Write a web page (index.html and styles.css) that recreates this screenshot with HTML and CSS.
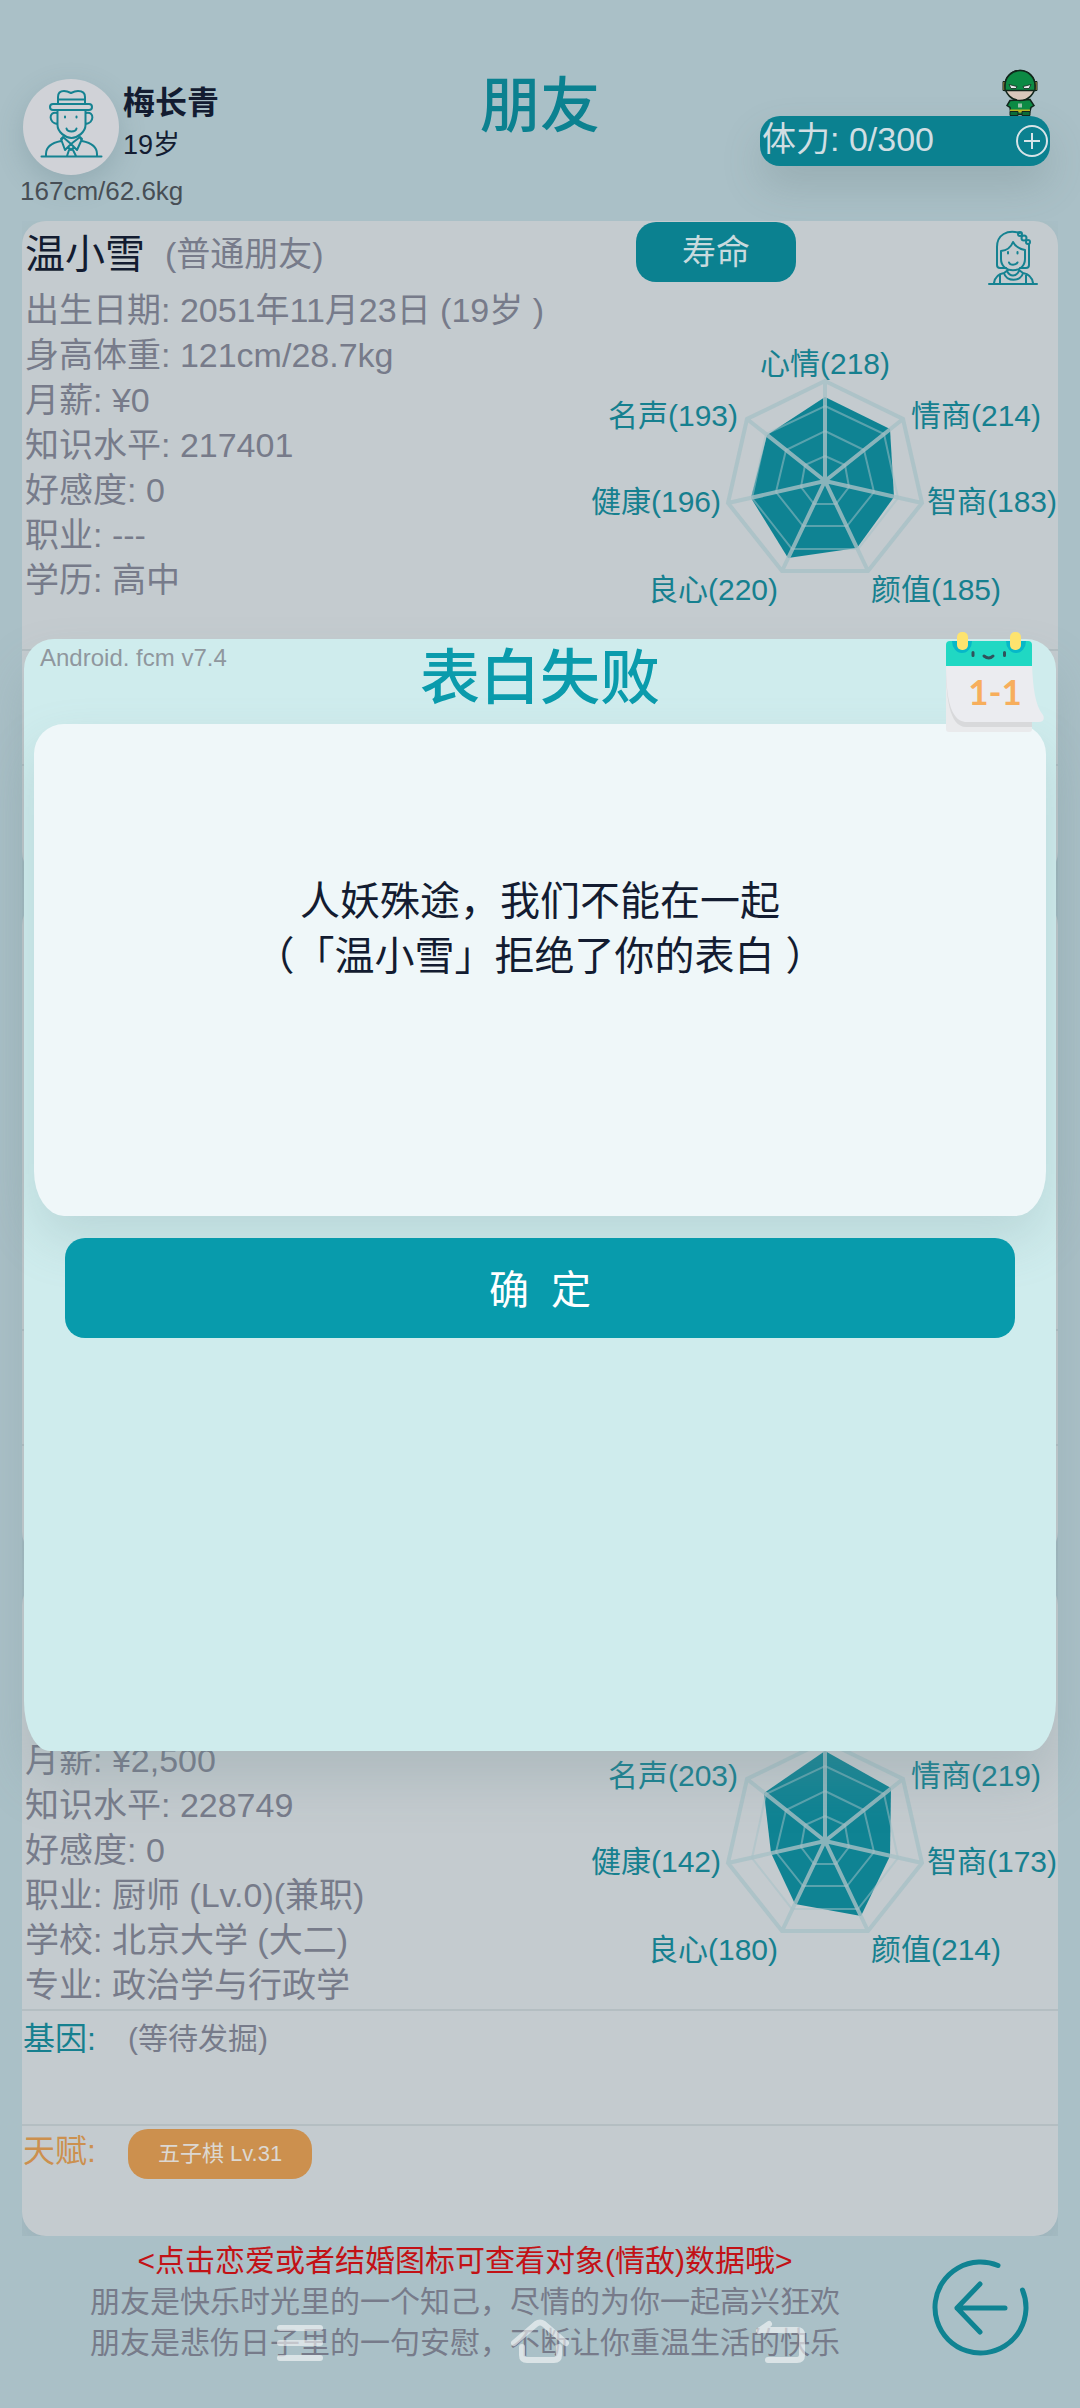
FILE: index.html
```html
<!DOCTYPE html>
<html lang="zh-CN">
<head>
<meta charset="utf-8">
<meta name="viewport" content="width=device-width, initial-scale=1">
<title>朋友</title>
<link rel="stylesheet" href="styles.css">
</head>
<body>
<div class="page">
  <header class="top">
    <div class="player">
      <div class="player-row">
        <div class="avatar">
          <svg viewBox="23 79 96 96" class="line-icon" aria-hidden="true">
            <path d="M58 104V97q0-6 6-6 3 0 7 2 4-2 7-2 7 0 7 6v7M58 99.500h27"/>
            <rect x="50" y="104" width="42" height="6" rx="3"/>
            <path d="M57.500 111v14c0 7 8 13 14 13s14-6 14-13v-14M57 113c-9-2-8 10 0 11M86 113c9-2 8 10 0 11"/>
            <path d="M65 116.500v1M76.500 116.500v1M66.500 128.500c1 4 9 4 10 0"/>
            <path d="M41.500 156.500h60M46 156v-2c0-7 5-11 15-13l2-4M97 156v-2c0-7-5-11-15-13l-2-4M61 139l4 11 6-6 6 6 5-11-2-2-9 7-8-7zM68 147l3 3 3-3M69 150l-2 6M73 150l3 6"/>
          </svg>
        </div>
        <div class="player-name">
          <strong>梅长青</strong>
          <span>19岁</span>
        </div>
      </div>
      <p class="player-body">167cm/62.6kg</p>
    </div>
    <h1 class="title">朋友</h1>
    <div class="energy-wrap">
      <svg class="hero" viewBox="1002 69 36 47" aria-hidden="true">
        <path d="M1010 101l-3 5 3 2 1 7h18l2-7 3-2-4-6z" fill="#0c8a44" stroke="#12261c" stroke-width="1.500"/>
        <path d="M1010 110h20v3h-20z" fill="#b9b424"/>
        <path d="M1010 112h8v4h-8zM1022 112h8v4h-8z" fill="#0c6c38" stroke="#12261c"/>
        <path d="M1018 104h4v4h-4z" fill="#9cc4ae"/>
        <path d="M1003 82h4v9h-4zM1033 82h4v9h-4z" fill="#c9a548" stroke="#12261c"/>
        <ellipse cx="1020" cy="86" rx="15" ry="15" fill="#d8c7bb" stroke="#12261c" stroke-width="1.500"/>
        <path d="M1005 91V86a15 15 0 0 1 30 0v5z" fill="#0c8a44" stroke="#12261c" stroke-width="1.500"/>
        <path d="M1009 85l8 2-1 2h-5zM1031 85l-8 2 1 2h5z" fill="#e8ecec" stroke="#12261c" stroke-width=".8"/>
      </svg>
      <div class="energy">
        <span>体力: 0/300</span>
        <button class="energy-add" type="button" aria-label="增加体力">
          <svg viewBox="0 0 34 34" aria-hidden="true"><circle cx="17" cy="17" r="15"/><path d="M17 9v16M9 17h16"/></svg>
        </button>
      </div>
    </div>
  </header>

  <main class="friends">
    <article class="friend">
      <section class="profile">
        <div class="profile-head">
          <h2>温小雪</h2>
          <span class="relation">(普通朋友)</span>
          <button class="life" type="button">寿命</button>
          <svg viewBox="988 230 50 56" class="line-icon girl" aria-hidden="true">
            <path d="M1020 233c-13-4-23 2-23 14v18q0 3 3 3h6M1029 244v21q0 3-3 3h-6"/>
            <path d="M1001 251q9-1 12-9 3 6 12 8v9c0 15-24 15-24 0z"/>
            <path d="M1008 252v1.500M1017.500 252v1.500M1009 262.500c1 3 7 3 8.500 0"/>
            <circle cx="1020" cy="234" r="2"/><circle cx="1024" cy="238" r="2.500"/><circle cx="1028" cy="242" r="2"/>
            <path d="M989 284h48M994 283c1-6 4-9 10-10l4-3M1033 283c-1-6-4-9-10-10l-4-3M1000 275v8M1026 275v8M1004 273c2 9 17 9 19 0M1007 271c3 6 9 6 12 0"/>
          </svg>
        </div>
        <div class="profile-body">
          <ul class="facts">
            <li>出生日期: 2051年11月23日 (19岁 )</li>
            <li>身高体重: 121cm/28.7kg</li>
            <li>月薪: ¥0</li>
            <li>知识水平: 217401</li>
            <li>好感度: 0</li>
            <li>职业: ---</li>
            <li>学历: 高中</li>
          </ul>
          <svg class="radar" viewBox="588 330 470 290" role="img" aria-label="能力图">
            <g transform="translate(825 481)">
              <polygon class="radar-value" points="0,-84 65,-52 69,16 32,67 -37,77 -74,17 -58,-46"/>
              <g id="web">
                <g class="ring">
                  <polygon points="0,-25 20,-16 24,6 11,23 -11,23 -24,6 -20,-16"/>
                  <polygon points="0,-50 39,-31 49,11 22,45 -22,45 -49,11 -39,-31"/>
                  <polygon points="0,-75 59,-47 73,17 33,68 -33,68 -73,17 -59,-47"/>
                </g>
                <path class="frame" d="M0-100L78-62 97 22 43 90H-43L-97 22-78-62ZM0 0V-100M0 0L78-62M0 0L97 22M0 0L43 90M0 0L-43 90M0 0L-97 22M0 0L-78-62"/>
              </g>
            </g>
            <text x="760" y="374">心情(218)</text>
            <text x="608" y="426">名声(193)</text>
            <text x="911" y="426">情商(214)</text>
            <text x="591" y="512">健康(196)</text>
            <text x="927" y="512">智商(183)</text>
            <text x="648" y="600">良心(220)</text>
            <text x="871" y="600">颜值(185)</text>
          </svg>
        </div>
      </section>
      <section class="trait"></section>
      <section class="trait"></section>
    </article>

    <article class="friend">
      <section class="profile"></section>
      <section class="trait"></section>
      <section class="trait"></section>
    </article>

    <article class="friend">
      <section class="profile">
        <div class="profile-head"></div>
        <div class="profile-body">
          <ul class="facts facts-late">
            <li>月薪: ¥2,500</li>
            <li>知识水平: 228749</li>
            <li>好感度: 0</li>
            <li>职业: 厨师 (Lv.0)(兼职)</li>
            <li>学校: 北京大学 (大二)</li>
            <li>专业: 政治学与行政学</li>
          </ul>
          <svg class="radar" viewBox="588 330 470 290" role="img" aria-label="能力图">
            <g transform="translate(825 481)">
              <polygon class="radar-value" points="0,-90 66,-53 65,15 36,75 -30,63 -54,12 -61,-48"/>
              <use href="#web"/>
            </g>
            <text x="608" y="426">名声(203)</text>
            <text x="911" y="426">情商(219)</text>
            <text x="591" y="512">健康(142)</text>
            <text x="927" y="512">智商(173)</text>
            <text x="648" y="600">良心(180)</text>
            <text x="871" y="600">颜值(214)</text>
          </svg>
        </div>
      </section>
      <section class="trait">
        <h3>基因:</h3>
        <p class="pending">(等待发掘)</p>
      </section>
      <section class="trait talent">
        <h3>天赋:</h3>
        <span class="tag">五子棋 Lv.31</span>
      </section>
    </article>
  </main>

  <footer class="foot">
    <div class="notes">
      <p class="hint">&lt;点击恋爱或者结婚图标可查看对象(情敌)数据哦&gt;</p>
      <p>朋友是快乐时光里的一个知己，尽情的为你一起高兴狂欢</p>
      <p>朋友是悲伤日子里的一句安慰，不断让你重温生活的快乐</p>
    </div>
    <button class="back" type="button" aria-label="返回">
      <svg viewBox="930 2258 100 100" aria-hidden="true"><path d="M998 2265.500A45.500 45.500 0 1 0 1022.500 2290M980 2284l-23 24 23 24M957 2308h48"/></svg>
    </button>
  </footer>
</div>

<div class="overlay">
  <div class="dialog" role="dialog" aria-labelledby="dialog-title">
    <div class="dialog-head">
      <small>Android. fcm v7.4</small>
      <h2 id="dialog-title">表白失败</h2>
      <svg class="calendar" viewBox="945 631 100 102" aria-hidden="true">
        <path d="M946 645h86v84q0 3-3 3h-80q-3 0-3-3z" fill="#e9eaec"/>
        <path d="M946 666c0 30 3 61 20 61h66V666z" fill="#d8d9db"/>
        <path d="M946 664h86c1 24 3 41 11 51 2 4 0 7-4 7h-74c-15-2-19-26-19-58z" fill="#ebecf0"/>
        <path d="M946 666v-21q0-4 4-4h78q4 0 4 4v21z" fill="#20d8c3"/>
        <path d="M952 641a10 12 0 0 0 20 0zM1006 641a10 12 0 0 0 20 0z" fill="#06b8c8"/>
        <rect x="957" y="632" width="11" height="18" rx="5" fill="#fde36e"/>
        <rect x="1010" y="632" width="11" height="18" rx="5" fill="#fde36e"/>
        <path d="M973 652.500v3M1004.500 652.500v3M984 656q5 4 9 0" fill="none" stroke="#30525b" stroke-width="3" stroke-linecap="round"/>
        <text x="995" y="705" text-anchor="middle">1-1</text>
      </svg>
    </div>
    <div class="message">
      <p>人妖殊途，我们不能在一起</p>
      <p>（「温小雪」拒绝了你的表白 ）</p>
    </div>
    <button class="confirm" type="button">确&nbsp; 定</button>
  </div>
</div>

<nav class="system" aria-label="系统导航">
  <button type="button" aria-label="菜单"><svg viewBox="270 2320 60 50"><path d="M280 2330h40M280 2345h40M280 2360h40"/></svg></button>
  <button type="button" aria-label="主页"><svg viewBox="510 2318 60 50"><path d="M514 2343l22-19q4-3 8 0l22 19M522 2347v8q0 5 5 5h27q5 0 5-5v-8"/></svg></button>
  <button type="button" aria-label="后退"><svg viewBox="750 2318 60 50"><path d="M769 2324l-10 7M760 2330h37q5 0 5 5v20q0 5-5 5h-29"/></svg></button>
</nav>
</body>
</html>
```
FILE: styles.css
```css
* { box-sizing: border-box; margin: 0; padding: 0; }

body {
  position: relative;
  min-height: 100vh;
  background: #aac0c7;
  color: #777b8a;
  font-family: "Liberation Sans", "Noto Sans CJK SC", sans-serif;
  font-size: 34px;
  text-spacing-trim: space-all;
}

button { border: 0; background: none; font: inherit; color: inherit; }
ul { list-style: none; }
svg { display: block; }

.page { min-height: 100vh; display: flex; flex-direction: column; }

/* Header */
.top {
  display: grid;
  grid-template-columns: 1fr auto 1fr;
  height: 221px;
  padding: 68px 20px 0;
}
.player-row { display: flex; align-items: flex-start; gap: 4px; padding: 11px 0 0 3px; }
.avatar {
  width: 96px;
  height: 96px;
  border-radius: 50%;
  background: #d0d2d7;
  box-shadow: 0 10px 28px rgba(70, 100, 110, .22);
}
.line-icon { fill: none; stroke: #158291; stroke-width: 2; stroke-linecap: round; stroke-linejoin: round; }
.player-name { display: grid; padding-top: 3px; color: #131c31; line-height: 42px; }
.player-name strong { font-size: 32px; }
.player-name span { font-size: 27px; }
.player-body { font-size: 26px; line-height: 32px; color: #474e55; }
.title { padding-top: 3px; font-size: 60px; line-height: 72px; font-weight: 500; color: #0b8190; }
.energy-wrap { justify-self: end; margin-right: 10px; }
.hero { width: 36px; height: 48px; margin: 0 12px 0 auto; }
.energy {
  display: flex;
  align-items: center;
  justify-content: space-between;
  width: 290px;
  height: 50px;
  padding: 0 1px 0 2px;
  border-radius: 20px;
  background: #0b8190;
  color: #d0dee3;
  line-height: 46px;
  box-shadow: 0 20px 40px rgba(80, 100, 100, .2);
}
.energy > span { align-self: flex-start; }
.energy-add { width: 34px; height: 34px; }
.energy-add svg { fill: none; stroke: #d8e4e8; stroke-width: 2; }

/* Friend cards */
.friends { display: grid; gap: 25px; margin: 0 22px; overflow: hidden; }
.friend { border-radius: 24px; background: #c4cbcf; box-shadow: 0 20px 40px rgba(60, 90, 100, .15); }
.profile { min-height: 428px; }
.profile-head { display: flex; align-items: flex-start; height: 67px; padding: 0 20px 0 3px; }
.profile-head h2 { font-size: 40px; line-height: 66px; font-weight: 400; color: #131c31; }
.relation { margin-left: 20px; line-height: 66px; }
.life {
  width: 160px;
  height: 60px;
  margin: 1px 0 0 auto;
  border-radius: 20px;
  background: #0b8190;
  color: #c8dade;
  line-height: 56px;
}
.girl { width: 50px; height: 56px; margin: 9px 0 0 192px; }
.profile-body { display: flex; justify-content: space-between; }
.facts { padding-left: 3px; line-height: 45px; white-space: nowrap; }
.facts-late { padding-top: 90px; }
.radar { flex: none; width: 470px; height: 290px; margin-top: 42px; overflow: visible; }
.radar text { font-size: 30px; fill: #16808f; }
.radar-value { fill: #0f8393; }
.frame { fill: none; stroke: #a7c0c6; stroke-width: 4; stroke-opacity: .8; }
.ring { fill: none; stroke: #a3c2c8; stroke-width: 2; stroke-opacity: .5; }
.trait {
  display: flex;
  gap: 32px;
  min-height: 115px;
  padding: 0 1px;
  border-top: 2px solid #b4bec2;
}
.trait:last-child { min-height: 112px; }
.trait h3 { font-size: 32px; line-height: 56px; font-weight: 400; color: #16808f; }
.pending { font-size: 30px; line-height: 56px; }
.talent h3 { line-height: 50px; color: #cc904e; }
.tag {
  align-self: flex-start;
  margin-top: 3px;
  padding: 0 30px;
  border-radius: 20px;
  background: #cc904e;
  color: #dcd8d2;
  font-size: 22px;
  line-height: 50px;
}

/* Footer */
.foot { display: flex; justify-content: space-between; padding: 4px 50px 41px 90px; }
.notes { font-size: 30px; line-height: 41px; text-align: center; }
.hint { color: #c21216; }
.back { width: 100px; height: 100px; margin-top: 18px; }
.back svg { fill: none; stroke: #0f8392; stroke-width: 5; stroke-linecap: round; stroke-linejoin: round; }

/* Result dialog */
.overlay { position: absolute; inset: 0; padding: 639px 24px 0; }
.dialog {
  display: flex;
  flex-direction: column;
  min-height: 1112px;
  padding: 0 10px;
  border-radius: 30px 30px 26px 26px / 30px 30px 50px 50px;
  background: #cfeced;
  box-shadow: 0 30px 50px rgba(110, 140, 145, .25);
}
.dialog-head { display: grid; grid-template-columns: 1fr auto 1fr; height: 85px; }
.dialog-head small { padding-left: 6px; font-size: 24px; line-height: 38px; color: #8f979e; }
.dialog-head h2 { padding-top: 4px; font-size: 60px; line-height: 72px; font-weight: 500; color: #0a9bac; }
.calendar { position: relative; justify-self: end; width: 100px; height: 102px; margin: -8px 1px 0 0; }
.calendar text { font: 700 35px Lato, sans-serif; fill: #f7ae5c; }
.message {
  display: flex;
  flex-direction: column;
  align-items: center;
  min-height: 492px;
  padding-top: 150px;
  border-radius: 30px 30px 30px 30px / 30px 30px 45px 45px;
  background: #eff7f9;
  box-shadow: 0 24px 50px rgba(120, 150, 155, .24);
  color: #131c31;
  font-size: 40px;
  line-height: 55px;
}
.confirm {
  height: 100px;
  margin: 22px 31px 0;
  padding-bottom: 3px;
  border-radius: 20px;
  background: #089bac;
  color: #fff;
  font-size: 40px;
}

/* Device navigation keys */
.system {
  position: absolute;
  left: 0;
  right: 0;
  bottom: 40px;
  display: flex;
  justify-content: center;
  gap: 180px;
}
.system button { width: 60px; height: 50px; }
.system svg { fill: none; stroke: #fff; stroke-opacity: .56; stroke-width: 6; stroke-linecap: round; stroke-linejoin: round; }
```
